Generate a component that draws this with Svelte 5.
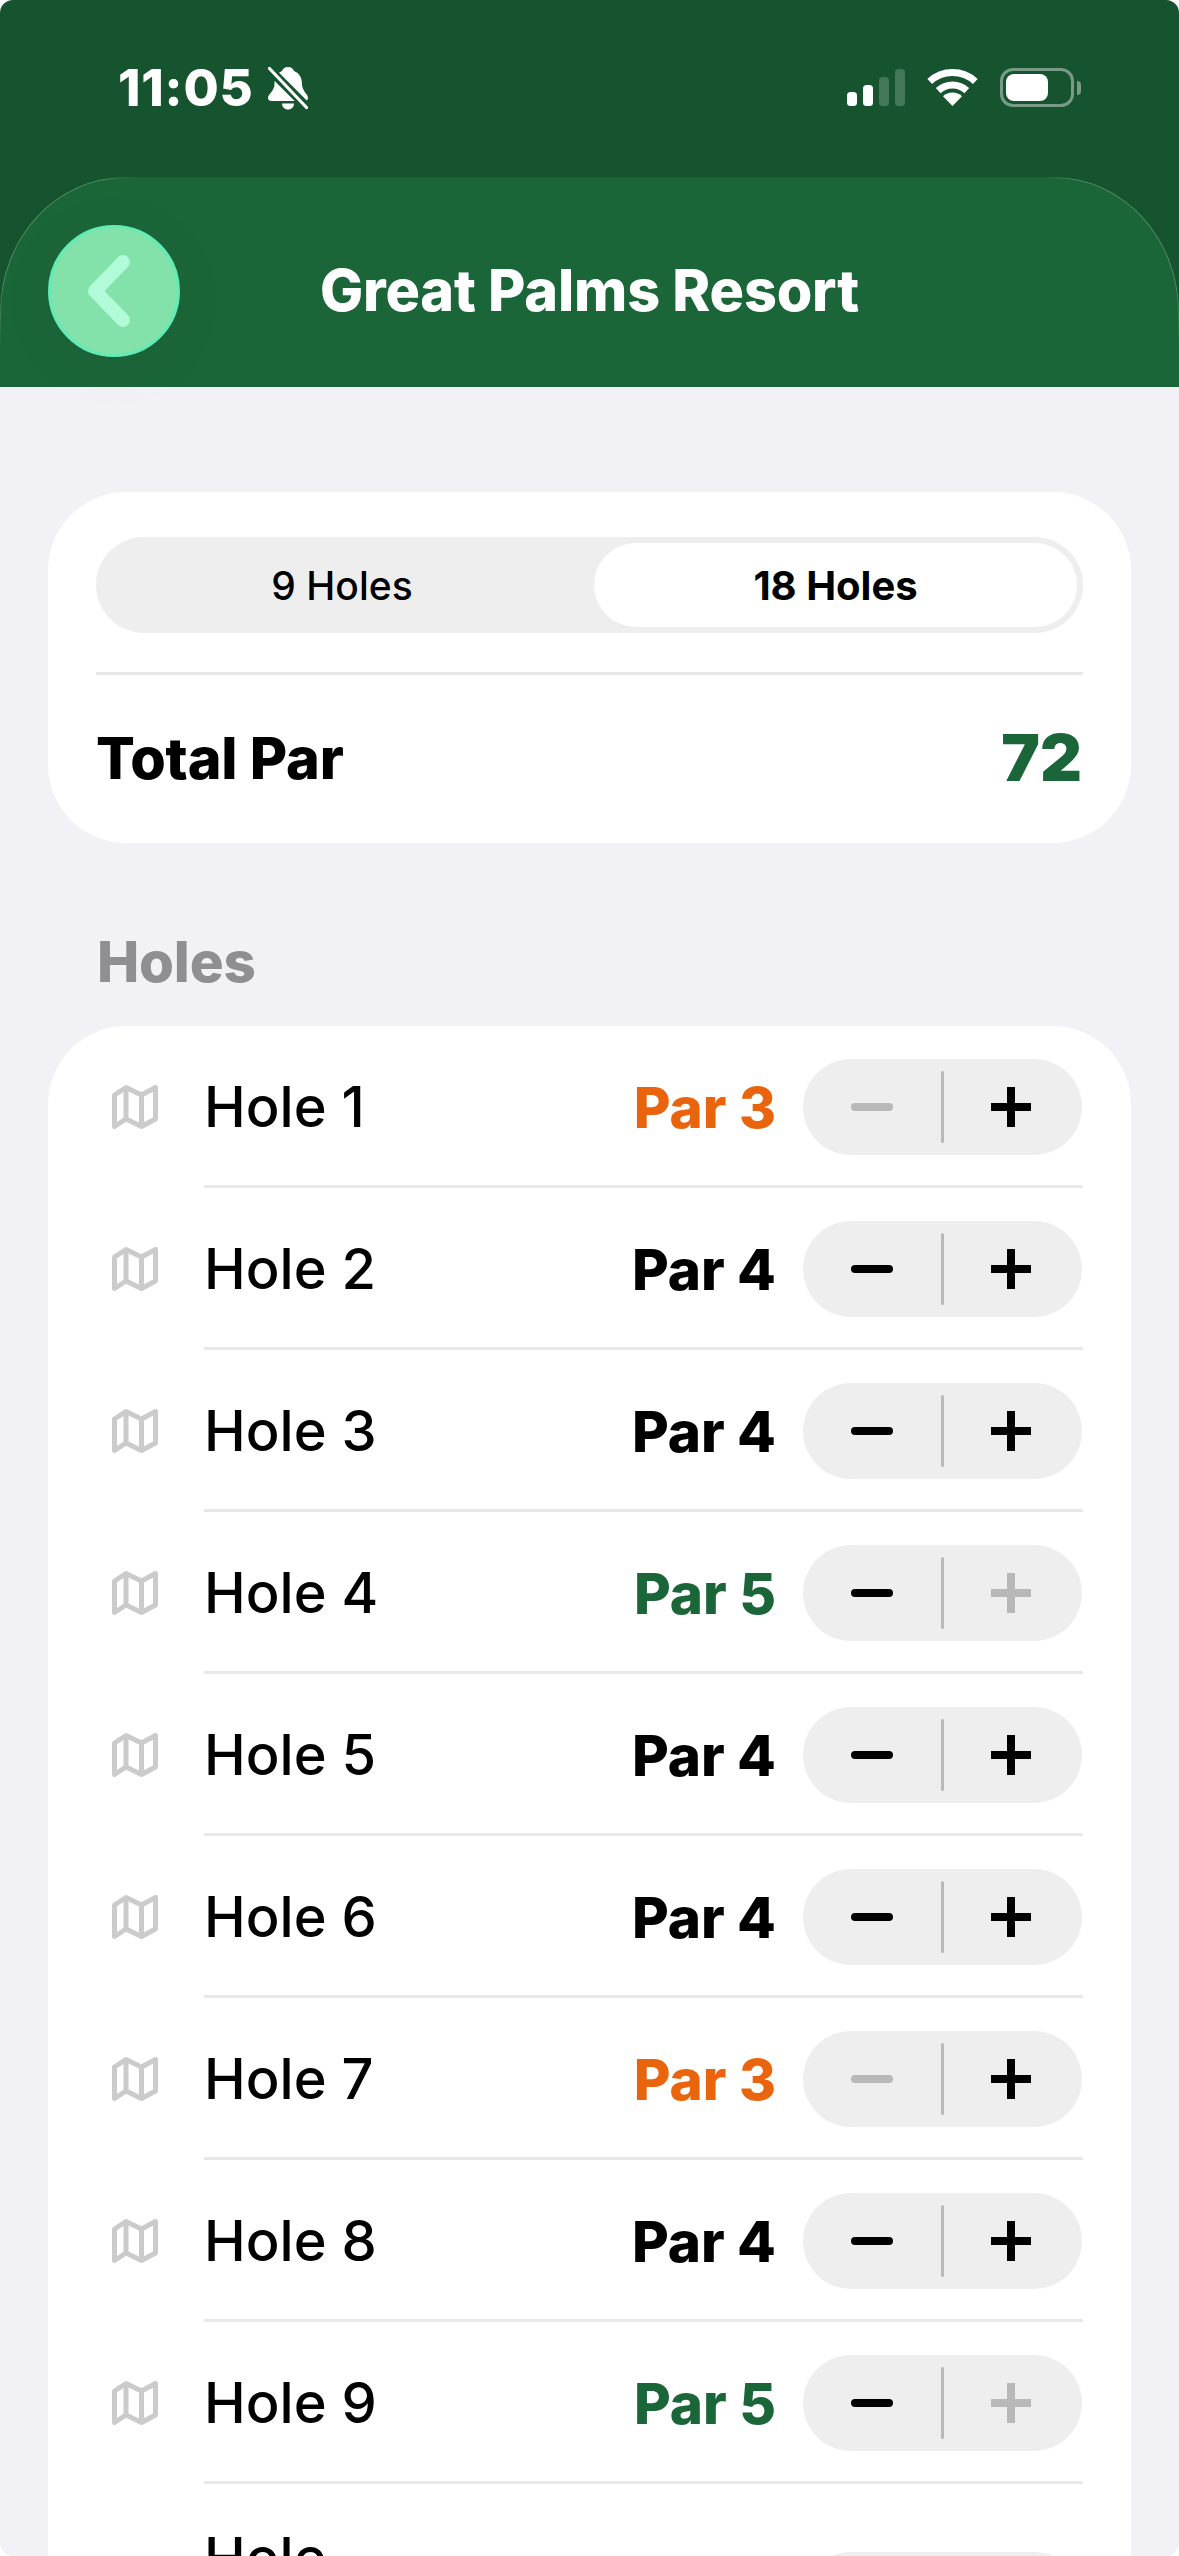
<script>
  const holes = [
    { n: 1, par: 3 }, { n: 2, par: 4 }, { n: 3, par: 4 }, { n: 4, par: 5 }, { n: 5, par: 4 },
    { n: 6, par: 4 }, { n: 7, par: 3 }, { n: 8, par: 4 }, { n: 9, par: 5 }, { n: 10, par: 4 }
  ];
</script>

<div class="screen">
  <div class="top">
    <div class="status">
      <div class="time-wrap">
        <span class="time">11:05</span>
        <svg class="bell" width="40" height="44" viewBox="0 0 40 44">
          <path fill="#fff" d="M20 1C23 1 25 2.5 26 5C31.500 7 34 12 34 18C34 25 40 28 40 32C40 34 38.500 35 36 35H4C1.500 35 0 34 0 32C0 28 6.500 25 6.500 18C6.500 12 9 7 14 5C15 2.500 17 1 20 1Z"/>
          <path fill="#fff" d="M14 37.500H26C26 41 23.500 43.500 20 43.500S14 41 14 37.500Z"/>
          <path d="M0 2L40 42" stroke="#16542f" stroke-width="9"/>
          <path d="M1.500 2.500L38.500 41.500" stroke="#fff" stroke-width="3.200" stroke-linecap="round"/>
        </svg>
      </div>
      <div class="sys">
        <svg width="58" height="37" viewBox="0 0 58 37">
          <rect x="0" y="23" width="10" height="14" rx="3.500" fill="#fff"/>
          <rect x="16" y="16" width="10" height="21" rx="3.500" fill="#fff"/>
          <rect x="32" y="8" width="10" height="29" rx="3.500" fill="#fff" opacity=".2"/>
          <rect x="48" y="0" width="10" height="37" rx="3.500" fill="#fff" opacity=".2"/>
        </svg>
        <svg class="wifi" width="51" height="37" viewBox="0 0 51 37">
          <path d="M2.700 12.500A33.500 33.500 0 0 1 48.300 12.500" fill="none" stroke="#fff" stroke-width="7"/>
          <path d="M11.200 21.600A21 21 0 0 1 39.800 21.600" fill="none" stroke="#fff" stroke-width="7"/>
          <path d="M25.500 37L16 27.200A14 14 0 0 1 35 27.200Z" fill="#fff"/>
        </svg>
        <div class="battery">
          <div class="shell"><div class="level"></div></div>
          <div class="cap"></div>
        </div>
      </div>
    </div>

    <header class="nav">
      <button class="back" aria-label="Back">
        <svg width="44" height="72" viewBox="0 0 44 72">
          <path d="M36 7L8 36L36 65" fill="none" stroke="#b2fbd8" stroke-width="14" stroke-linecap="round" stroke-linejoin="round"/>
        </svg>
      </button>
      <h1>Great Palms Resort</h1>
      <span></span>
    </header>
  </div>

  <main>
    <section class="card summary">
      <div class="segment">
        <div class="seg first">9 Holes</div>
        <div class="seg active">18 Holes</div>
      </div>
      <div class="total">
        <span class="total-label">Total Par</span>
        <span class="total-value">72</span>
      </div>
    </section>

    <h2>Holes</h2>

    <section class="card list">
      {#each holes as h}
        <div class="row">
          <svg class="map" width="46" height="44" viewBox="0 0 46 44">
            <path d="M2.500 10L14 2.500L29.500 10L43.500 2.500V34L29.500 41.500L14 34L2.500 41.500Z" fill="none" stroke="#cbcbcb" stroke-width="5" stroke-linejoin="round"/>
            <path d="M14 3V34M29.500 10V41" fill="none" stroke="#cbcbcb" stroke-width="5"/>
          </svg>
          <div class="body">
            <div class="name">Hole {h.n}</div>
            <div class="par" class:low={h.par === 3} class:high={h.par === 5}>Par {h.par}</div>
            <div class="stepper">
              <div class="step" class:off={h.par === 3}><span class="minus"></span></div>
              <div class="sep"></div>
              <div class="step" class:off={h.par === 5}><span class="plus"></span></div>
            </div>
          </div>
        </div>
      {/each}
    </section>
  </main>
</div>

<style>
  :global(body) {
    margin: 0;
    background: #fff;
  }
  .screen {
    width: 1179px;
    height: 2556px;
    overflow: hidden;
    border-radius: 13px;
    background: #f1f1f6;
    font-family: Inter, "Liberation Sans", sans-serif;
    color: #000;
    position: relative;
  }
  .top {
    background: #16542f;
  }
  .status {
    height: 177px;
    box-sizing: border-box;
    display: flex;
    justify-content: space-between;
    padding: 66px 98px 0 118px;
    color: #fff;
  }
  .time-wrap {
    display: flex;
    align-items: flex-start;
    gap: 14px;
    height: 44px;
  }
  .time {
    font-size: 51px;
    font-weight: 800;
    line-height: 44px;
    letter-spacing: 0.8px;
  }
  .sys {
    display: flex;
    align-items: flex-start;
    padding-top: 3px;
    gap: 22px;
  }
  .battery {
    display: flex;
    align-items: center;
    gap: 3px;
    margin-top: -1px;
  }
  .shell {
    width: 74px;
    height: 39px;
    box-sizing: border-box;
    border: 3px solid rgba(255, 255, 255, 0.42);
    border-radius: 13px;
    padding: 3px;
  }
  .level {
    width: 42px;
    height: 27px;
    background: #fff;
    border-radius: 8px;
  }
  .cap {
    width: 4px;
    height: 14px;
    background: rgba(255, 255, 255, 0.42);
    border-radius: 0 4px 4px 0;
  }
  .nav {
    height: 210px;
    box-sizing: border-box;
    background: #1b6639;
    display: grid;
    grid-template-columns: 1fr auto 1fr;
    align-items: center;
    padding: 48px 48px 30px;
    position: relative;
    border-radius: 125px 125px 0 0 / 135px 135px 0 0;
  }
  .nav::before {
    content: "";
    position: absolute;
    inset: 0;
    border: 1px solid rgba(255, 255, 255, 0.25);
    border-bottom: 0;
    border-radius: inherit;
    pointer-events: none;
    mask-image: linear-gradient(90deg, #000 0, #000 105px, transparent 130px, transparent calc(100% - 130px), #000 calc(100% - 105px), #000 100%), linear-gradient(#000 0, #000 110px, transparent 170px);
    mask-composite: intersect;
  }
  .back {
    width: 132px;
    height: 132px;
    box-sizing: border-box;
    padding: 0 10px 0 0;
    border-radius: 50%;
    border: 3px solid #62ebb4;
    background: #83e2aa;
    display: flex;
    align-items: center;
    justify-content: center;
    box-shadow: 0 10px 60px rgba(0, 0, 0, 0.05);
    justify-self: start;
  }
  h1 {
    margin: 0 0 2px;
    font-size: 57.5px;
    font-weight: 800;
    color: #fff;
    white-space: nowrap;
    letter-spacing: -0.2px;
  }
  main {
    padding: 105px 48px 0;
  }
  .card {
    background: #fff;
    border-radius: 78px;
  }
  .summary {
    padding: 45px 48px 0;
    height: 351px;
    box-sizing: border-box;
  }
  .segment {
    height: 96px;
    box-sizing: border-box;
    padding: 6px;
    border-radius: 48px;
    background: #eeeeee;
    display: grid;
    grid-template-columns: 492px 1fr;
  }
  .seg {
    display: flex;
    align-items: center;
    justify-content: center;
    font-size: 39px;
    font-weight: 500;
    border-radius: 42px;
  }
  .seg.first {
    padding-right: 12px;
  }
  .seg.active {
    background: #fff;
    font-size: 40px;
    font-weight: 700;
  }
  .total {
    margin-top: 39px;
    border-top: 3px solid #e8e8e8;
    height: 168px;
    box-sizing: border-box;
    display: flex;
    align-items: center;
    justify-content: space-between;
  }
  .total-label {
    font-size: 57.5px;
    font-weight: 800;
    letter-spacing: -0.2px;
  }
  .total-value {
    font-size: 65px;
    font-weight: 900;
    color: #1b6639;
    margin-right: 1px;
  }
  h2 {
    margin: 0;
    height: 183px;
    box-sizing: border-box;
    padding: 88px 0 0 49px;
    line-height: 62px;
    font-size: 56.5px;
    font-weight: 800;
    letter-spacing: -0.2px;
    color: #8e8e93;
  }
  .list {
    padding: 0 48px 0 64px;
  }
  .row {
    display: flex;
    align-items: stretch;
    gap: 46px;
  }
  .map {
    flex: none;
    align-self: center;
  }
  .body {
    flex: 1;
    display: flex;
    align-items: center;
    padding: 33px 0 30px;
    border-bottom: 3px solid #e8e8e8;
  }
  .name {
    width: 185px;
    margin-right: auto;
    font-size: 56px;
    font-weight: 500;
    line-height: 83px;
  }
  .par {
    font-size: 56.500px;
    font-weight: 800;
    margin-right: 27px;
  }
  .par.low {
    color: #ea640e;
  }
  .par.high {
    color: #1b6639;
  }
  .stepper {
    flex: none;
    width: 279px;
    height: 96px;
    margin-right: 1px;
    border-radius: 48px;
    background: #eeeeee;
    display: grid;
    grid-template-columns: 1fr 3px 1fr;
    align-items: center;
    justify-items: center;
  }
  .sep {
    width: 3px;
    height: 72px;
    background: #b9b9b9;
    border-radius: 2px;
  }
  .step {
    color: #000;
    display: flex;
  }
  .step.off {
    color: #b8b8b8;
  }
  .minus {
    display: block;
    width: 42px;
    height: 8px;
    border-radius: 4px;
    background: currentColor;
  }
  .plus {
    display: block;
    width: 40px;
    height: 40px;
    margin-right: 4px;
    background:
      linear-gradient(currentColor, currentColor) center / 40px 8px no-repeat,
      linear-gradient(currentColor, currentColor) center / 8px 40px no-repeat;
    border-radius: 4px;
  }
</style>
